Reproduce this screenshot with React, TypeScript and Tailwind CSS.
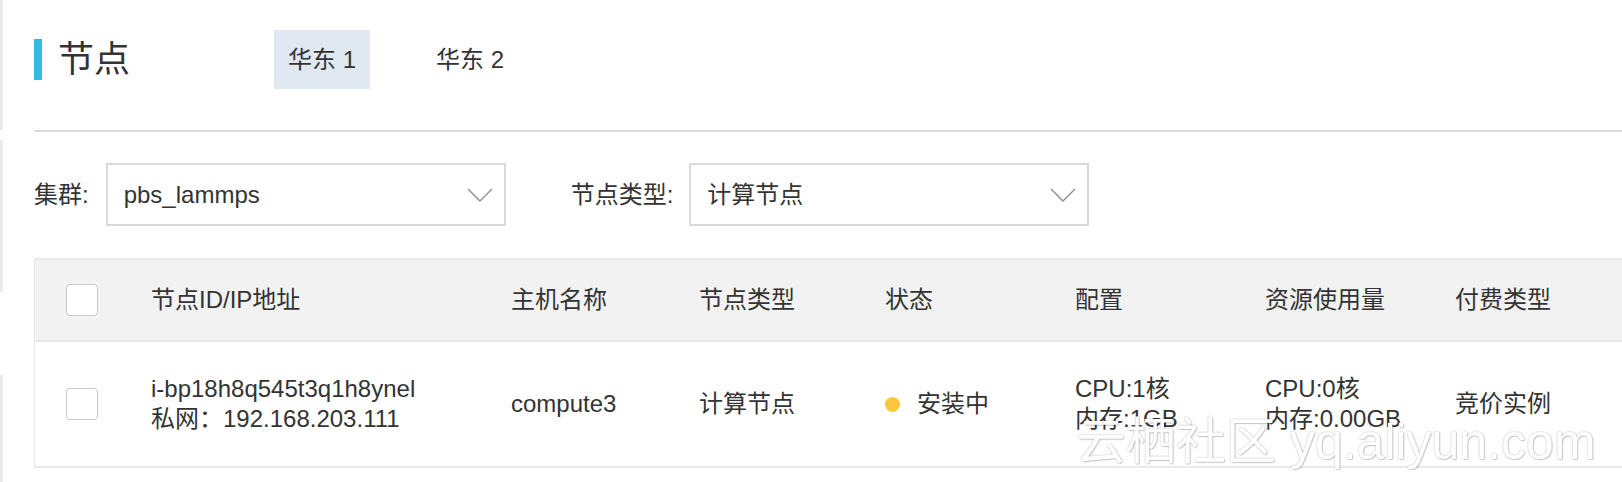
const FONT = "font-['Liberation_Sans','Noto_Sans_CJK_SC',sans-serif]"

function Select({ value }: { value: string }) {
  return (
    <div className="w-[400px] h-[63px] border-2 border-[#d9d9d9] bg-white flex items-center justify-between pl-[16px] pr-[11px]">
      <span className="text-[24px] leading-[28px] text-[#333]">{value}</span>
      <svg width="26" height="14" viewBox="0 0 26 14" fill="none" className="text-[#8c8c8c]">
        <polyline points="1,1 13,13 25,1" stroke="currentColor" strokeWidth="1.4" />
      </svg>
    </div>
  )
}

function Checkbox() {
  return <div className="w-[32px] h-[32px] rounded-[4px] border-[1.5px] border-[#c9c9c9] bg-white" />
}

const cols = 'grid grid-cols-[116px_360px_188px_186px_190px_190px_190px_1fr]'

export default function App() {
  return (
    <div className={`relative flex w-full h-[482px] overflow-hidden bg-white text-[#333] ${FONT}`}>
      {/* sidebar edge */}
      <div className="flex flex-col w-[3px] shrink-0">
        <div className="h-[130px] bg-[#e7eaee]" />
        <div className="h-[10px] bg-white" />
        <div className="h-[152px] bg-[#e7eaee]" />
        <div className="h-[83px] bg-white" />
        <div className="flex-1 bg-[#e7eaee]" />
      </div>

      <div className="flex-1 pl-[31px]">
        {/* title + region tabs */}
        <div className="mt-[30px] h-[59px] flex items-center">
          <div className="w-[8px] h-[41px] bg-[#36b9e9]" />
          <h1 className="ml-[16px] text-[36px] leading-[40px] font-normal">节点</h1>
          <div className="ml-[144px] h-full flex items-center">
            <div className="h-full px-[14px] flex items-center bg-[#e0e8f1] text-[24px]">华东 1</div>
            <div className="ml-[52px] h-full px-[14px] flex items-center text-[24px]">华东 2</div>
          </div>
        </div>

        <div className="mt-[41px] h-[2px] bg-[#dcdcdc]" />

        {/* filters */}
        <div className="mt-[31px] flex items-center">
          <span className="text-[24px]">集群:</span>
          <div className="ml-[17px]">
            <Select value="pbs_lammps" />
          </div>
          <span className="ml-[65px] text-[24px]">节点类型:</span>
          <div className="ml-[16px]">
            <Select value="计算节点" />
          </div>
        </div>

        {/* table */}
        <div className="mt-[32px] border-t-2 border-l border-b-2 border-[#e8ebee] text-[24px]">
          <div className={`${cols} h-[82px] items-center bg-[#f2f2f2] border-b-2 border-[#e6e9ec]`}>
            <div className="pl-[31px]"><Checkbox /></div>
            <div>节点ID/IP地址</div>
            <div>主机名称</div>
            <div>节点类型</div>
            <div>状态</div>
            <div>配置</div>
            <div>资源使用量</div>
            <div>付费类型</div>
          </div>
          <div className={`${cols} h-[124px] items-center leading-[30px]`}>
            <div className="pl-[31px]"><Checkbox /></div>
            <div>
              <div>i-bp18h8q545t3q1h8ynel</div>
              <div>私网：192.168.203.111</div>
            </div>
            <div>compute3</div>
            <div>计算节点</div>
            <div className="flex items-center">
              <span className="w-[15px] h-[15px] rounded-full bg-[#fbc73c]" />
              <span className="ml-[17px]">安装中</span>
            </div>
            <div>
              <div>CPU:1核</div>
              <div>内存:1GB</div>
            </div>
            <div>
              <div>CPU:0核</div>
              <div>内存:0.00GB</div>
            </div>
            <div>竞价实例</div>
          </div>
        </div>
      </div>

      {/* watermark */}
      <div className="absolute left-[1076px] top-[417px] text-[50px] leading-none text-white whitespace-nowrap [text-shadow:0_0_2px_rgba(0,0,0,0.3),1px_1px_1px_rgba(0,0,0,0.15)]">
        云栖社区 yq.aliyun.com
      </div>
    </div>
  )
}
